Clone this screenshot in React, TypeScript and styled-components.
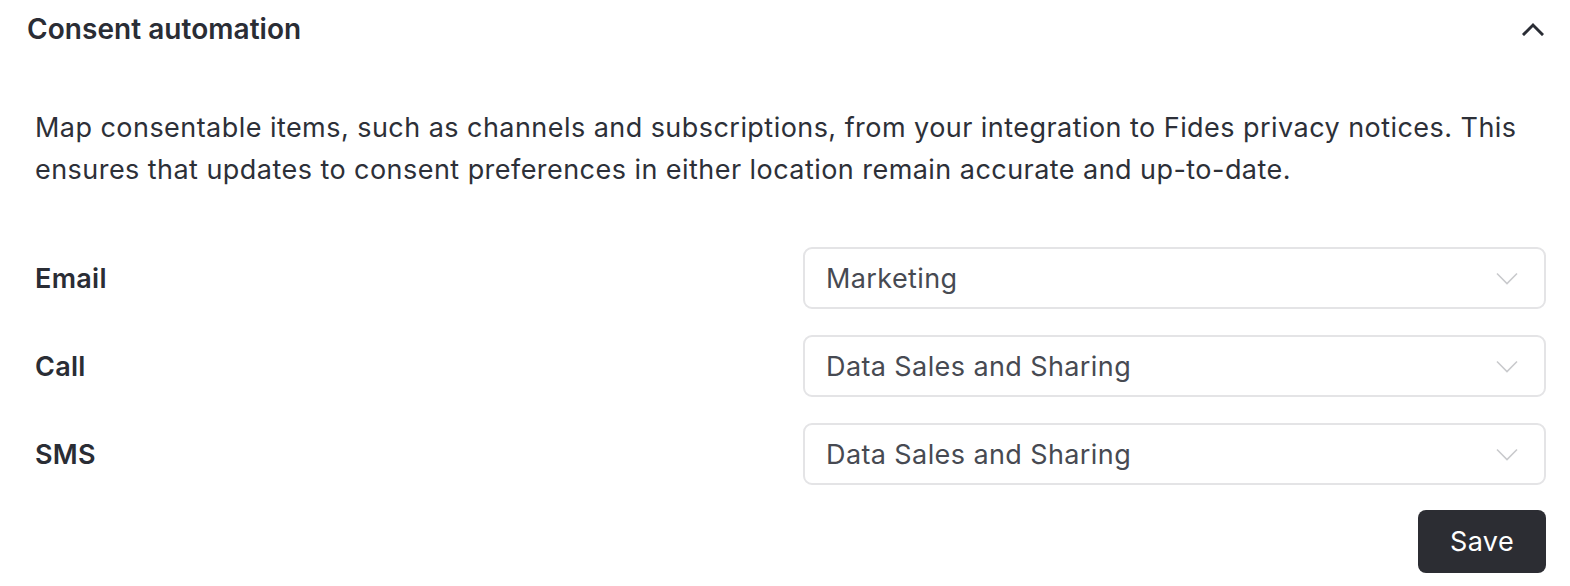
import React from "react";
import styled, { createGlobalStyle } from "styled-components";

const Global = createGlobalStyle`
  html, body { margin: 0; padding: 0; background: #ffffff; }
  body {
    font-family: Inter, "Noto Sans", sans-serif;
    -webkit-font-smoothing: antialiased;
  }
  * { box-sizing: border-box; }
`;

const Panel = styled.section`
  width: 1570px;
  height: 586px;
  display: flex;
  flex-direction: column;
  padding: 0 24px 0 0;
  background: #ffffff;
`;

const Header = styled.div`
  height: 58px;
  display: flex;
  align-items: center;
  justify-content: space-between;
  padding: 0 1px 0 27px;
`;

const Title = styled.h2`
  margin: 0;
  font-size: 28px;
  font-weight: 600;
  color: #2a2d35;
  letter-spacing: 0.05px;
`;

const Toggle = styled.button`
  border: 0;
  background: transparent;
  padding: 0;
  display: flex;
  width: 24px;
  height: 24px;
  align-items: center;
  justify-content: center;
  cursor: pointer;
`;

const Body = styled.div`
  display: flex;
  flex-direction: column;
  padding-left: 35px;
`;

const Description = styled.p`
  margin: 49px 0 0 0;
  font-size: 27px;
  line-height: 42px;
  font-weight: 400;
  letter-spacing: 0.45px;
  color: #2d3038;
`;

const Rows = styled.div`
  margin-top: 56px;
  display: flex;
  flex-direction: column;
  gap: 26px;
`;

const Row = styled.div`
  display: grid;
  grid-template-columns: 1fr 743px;
  align-items: center;
`;

const Label = styled.label`
  font-size: 27px;
  font-weight: 600;
  letter-spacing: 0.3px;
  color: #2a2d35;
`;

const Select = styled.div`
  height: 62px;
  border: 2px solid #e4e4e6;
  border-radius: 9px;
  display: flex;
  align-items: center;
  justify-content: space-between;
  padding: 0 26px 0 21px;
  font-size: 27px;
  letter-spacing: 0.4px;
  color: #474a52;
  background: #ffffff;
`;

const Footer = styled.div`
  margin-top: 25px;
  display: flex;
  justify-content: flex-end;
`;

const SaveButton = styled.button`
  width: 128px;
  height: 63px;
  border: 0;
  border-radius: 8px;
  background: #2c2d33;
  color: #ffffff;
  font-family: Inter, "Noto Sans", sans-serif;
  font-size: 27px;
  font-weight: 400;
  letter-spacing: 0.4px;
  cursor: pointer;
`;

const ChevronUp = () => (
  <svg width="22" height="14" viewBox="0 0 22 14" fill="none">
    <path d="M2 12 L11 3 L20 12" stroke="#2a2d35" strokeWidth="3" strokeLinecap="square" />
  </svg>
);

const ChevronDown = () => (
  <svg width="22" height="13" viewBox="0 0 22 13" fill="none">
    <path d="M1 1.5 L11 11.5 L21 1.5" stroke="#c9cacd" strokeWidth="1.6" />
  </svg>
);

const rows = [
  { label: "Email", value: "Marketing" },
  { label: "Call", value: "Data Sales and Sharing" },
  { label: "SMS", value: "Data Sales and Sharing" },
];

export default function App() {
  return (
    <>
      <Global />
      <Panel>
        <Header>
          <Title>Consent automation</Title>
          <Toggle aria-label="Collapse">
            <ChevronUp />
          </Toggle>
        </Header>
        <Body>
          <Description>
            Map consentable items, such as channels and subscriptions, from your integration to Fides privacy notices. This ensures that updates to consent preferences in either location remain accurate and up-to-date.
          </Description>
          <Rows>
            {rows.map((r) => (
              <Row key={r.label}>
                <Label>{r.label}</Label>
                <Select>
                  <span>{r.value}</span>
                  <ChevronDown />
                </Select>
              </Row>
            ))}
          </Rows>
          <Footer>
            <SaveButton>Save</SaveButton>
          </Footer>
        </Body>
      </Panel>
    </>
  );
}
